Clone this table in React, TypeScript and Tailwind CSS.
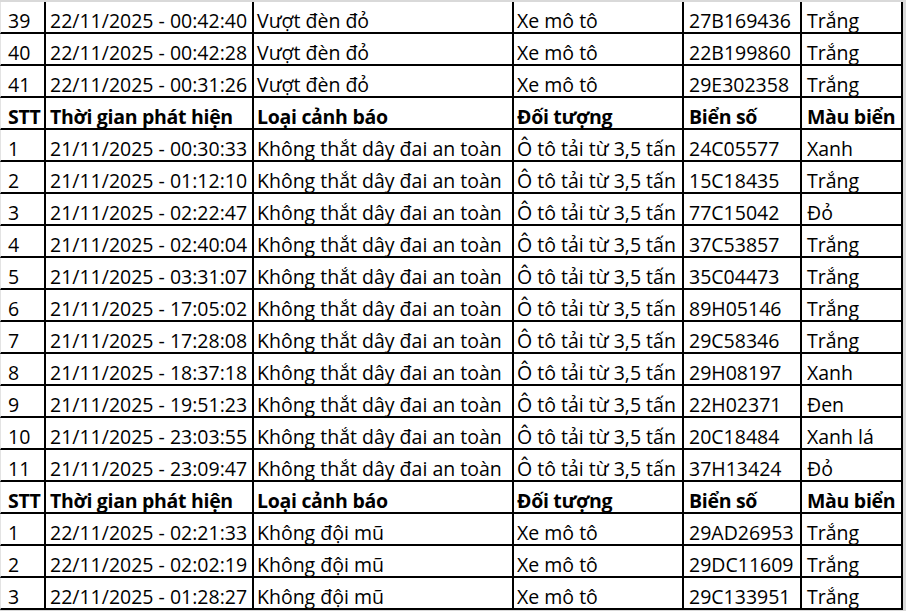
import React from "react";

type Row = { h?: boolean; c: string[] };

const hdr: Row = { h: true, c: ["STT", "Thời gian phát hiện", "Loại cảnh báo", "Đối tượng", "Biển số", "Màu biển"] };
const seat = "Không thắt dây đai an toàn";
const truck = "Ô tô tải từ 3,5 tấn";
const moto = "Xe mô tô";

const rows: Row[] = [
  { c: ["39", "22/11/2025 - 00:42:40", "Vượt đèn đỏ", moto, "27B169436", "Trắng"] },
  { c: ["40", "22/11/2025 - 00:42:28", "Vượt đèn đỏ", moto, "22B199860", "Trắng"] },
  { c: ["41", "22/11/2025 - 00:31:26", "Vượt đèn đỏ", moto, "29E302358", "Trắng"] },
  hdr,
  { c: ["1", "21/11/2025 - 00:30:33", seat, truck, "24C05577", "Xanh"] },
  { c: ["2", "21/11/2025 - 01:12:10", seat, truck, "15C18435", "Trắng"] },
  { c: ["3", "21/11/2025 - 02:22:47", seat, truck, "77C15042", "Đỏ"] },
  { c: ["4", "21/11/2025 - 02:40:04", seat, truck, "37C53857", "Trắng"] },
  { c: ["5", "21/11/2025 - 03:31:07", seat, truck, "35C04473", "Trắng"] },
  { c: ["6", "21/11/2025 - 17:05:02", seat, truck, "89H05146", "Trắng"] },
  { c: ["7", "21/11/2025 - 17:28:08", seat, truck, "29C58346", "Trắng"] },
  { c: ["8", "21/11/2025 - 18:37:18", seat, truck, "29H08197", "Xanh"] },
  { c: ["9", "21/11/2025 - 19:51:23", seat, truck, "22H02371", "Đen"] },
  { c: ["10", "21/11/2025 - 23:03:55", seat, truck, "20C18484", "Xanh lá"] },
  { c: ["11", "21/11/2025 - 23:09:47", seat, truck, "37H13424", "Đỏ"] },
  hdr,
  { c: ["1", "22/11/2025 - 02:21:33", "Không đội mũ", moto, "29AD26953", "Trắng"] },
  { c: ["2", "22/11/2025 - 02:02:19", "Không đội mũ", moto, "29DC11609", "Trắng"] },
  { c: ["3", "22/11/2025 - 01:28:27", "Không đội mũ", moto, "29C133951", "Trắng"] },
];

const pad = ["pl-[7px] border-l border-l-[#e3e3e3]", "pl-[4px]", "pl-[3px]", "pl-[3px]", "pl-[5px]", "pl-[5px]"];

export default function App() {
  return (
    <div
      className="w-[906px] h-[611px] overflow-hidden bg-[#d9d9d9] text-black"
      style={{ fontFamily: '"Open Sans", "Noto Sans", sans-serif' }}
    >
      <div className="mt-[2px] w-[903px] bg-white grid grid-cols-[46px_208px_260px_170px_118px_101px]">
        {rows.map((r, i) =>
          r.c.map((t, j) => (
            <div
              key={i + "-" + j}
              className={
                "h-[32px] border-b-2 border-r-2 border-black flex items-end whitespace-nowrap overflow-hidden text-[19.5px] leading-[23px] " +
                pad[j] +
                (r.h ? " font-bold tracking-[-0.3px]" : "")
              }
            >
              {t}
            </div>
          ))
        )}
      </div>
    </div>
  );
}
